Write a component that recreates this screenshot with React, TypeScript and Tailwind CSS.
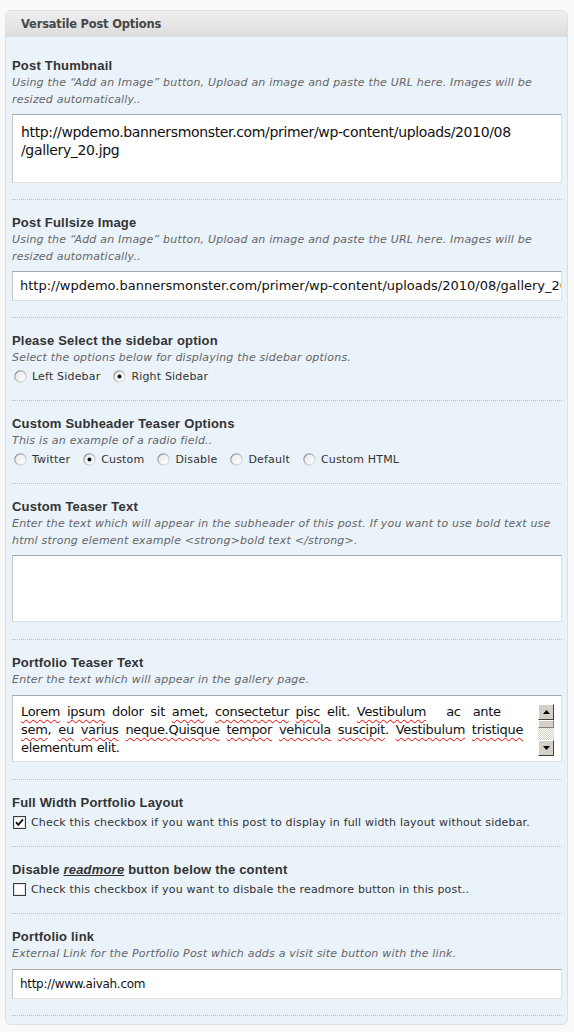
import React from 'react';

const label = "font-['Liberation_Sans',Arial,sans-serif] font-bold text-[13px] tracking-[0.2px] leading-[16px] text-[#333]";
const desc = "font-['DejaVu_Sans',Verdana,sans-serif] italic text-[11px] tracking-[0.2px] leading-[17px] text-[#666]";
const small = "font-['DejaVu_Sans',Verdana,sans-serif] text-[11px] tracking-[0.18px] leading-[17px] text-[#333]";
const field = "font-['DejaVu_Sans',Verdana,sans-serif] text-[#111] bg-white border border-[#dfdfdf] border-t-[#a9a9a9] border-l-[#c6c6c6]";

const Radio = ({ checked }: { checked?: boolean }) => (
  <svg width="13" height="13" viewBox="0 0 13 13" className="shrink-0">
    <defs>
      <linearGradient id="radioRing" x1="0" y1="0" x2="1" y2="1">
        <stop offset="0" stopColor="#7a7a7a" />
        <stop offset="0.55" stopColor="#c4c4c4" />
        <stop offset="1" stopColor="#f0f0f0" />
      </linearGradient>
      <linearGradient id="radioFill" x1="0" y1="0" x2="1" y2="1">
        <stop offset="0" stopColor="#e8e8e8" />
        <stop offset="1" stopColor="#ffffff" />
      </linearGradient>
    </defs>
    <circle cx="6.5" cy="6.5" r="6.2" fill="url(#radioRing)" />
    <circle cx="6.5" cy="6.5" r="5" fill="url(#radioFill)" />
    {checked && <circle cx="6.5" cy="6.5" r="2" fill="#111" />}
  </svg>
);

const Checkbox = ({ checked }: { checked?: boolean }) => (
  <svg width="13" height="13" viewBox="0 0 13 13" className="shrink-0">
    <rect x="0.5" y="0.5" width="12" height="12" fill="#fff" stroke="#3c3c3c" />
    <rect x="1.5" y="1.5" width="10" height="10" fill="none" stroke="#e4e4e4" />
    {checked && <path d="M3 6.2 L5.3 8.8 L10 3.4" fill="none" stroke="#111" strokeWidth="1.9" />}
  </svg>
);

const RadioRow = ({ items, selected, mt }: { items: string[]; selected: string; mt: string }) => (
  <div className={`flex items-center h-[17px] pl-[2px] ${mt}`}>
    {items.map(item => (
      <div key={item} className="flex items-center mr-[13px]">
        <Radio checked={item === selected} />
        <span className={`${small} ml-[5px]`}>{item}</span>
      </div>
    ))}
  </div>
);

const Section = ({ children, className }: { children: React.ReactNode; className: string }) => (
  <div className={`pt-[15px] border-b border-dotted border-[#bcbcbc] ${className}`}>{children}</div>
);

const Squiggle = ({ children }: { children: React.ReactNode }) => (
  <span className="underline decoration-wavy decoration-[#e00] decoration-1 underline-offset-[3px]">{children}</span>
);

const ScrollBtn = ({ up }: { up?: boolean }) => (
  <div className="h-[16px] bg-[#d4d0c8] border border-t-white border-l-white border-r-[#404040] border-b-[#404040] flex items-center justify-center">
    <svg width="7" height="4" viewBox="0 0 7 4">
      <path d={up ? 'M0 4 L3.5 0 L7 4 Z' : 'M0 0 L3.5 4 L7 0 Z'} fill="#000" />
    </svg>
  </div>
);

const App: React.FC = () => {
  return (
    <div className="min-h-screen bg-[#f9f9f9] pt-[10px] pb-[7px]">
      <div className="ml-[5px] w-[563px] border border-[#dfdfdf] rounded-[6px] overflow-hidden bg-[#eaf2fa]">
        {/* header */}
        <div className="h-[26px] bg-gradient-to-b from-[#efefef] to-[#dcdcdc] flex items-center pl-[15px] pt-[2px]">
          <h3 className="font-['DejaVu_Sans',Verdana,sans-serif] font-bold text-[11.5px] tracking-[-0.2px] text-[#464646]">
            Versatile Post Options
          </h3>
        </div>

        <div className="pt-[6px] pl-[6px] pr-[5px] pb-[8px]">
          <Section className="pb-[16px]">
            <div className={label}>Post Thumbnail</div>
            <div className={desc}>
              Using the “Add an Image” button, Upload an image and paste the URL here. Images will be resized automatically..
            </div>
            <div className={`${field} mt-[6px] h-[69px] pl-[8px] pt-[8px] text-[14px] tracking-[-0.35px] leading-[18px]`}>
              <div>http://wpdemo.bannersmonster.com/primer/wp-content/uploads/2010/08</div>
              <div>/gallery_20.jpg</div>
            </div>
          </Section>

          <Section className="pb-[16px]">
            <div className={label}>Post Fullsize Image</div>
            <div className={desc}>
              Using the “Add an Image” button, Upload an image and paste the URL here. Images will be resized automatically..
            </div>
            <div className={`${field} mt-[6px] h-[30px] pl-[7px] flex items-center overflow-hidden whitespace-nowrap text-[13px]`}>
              http://wpdemo.bannersmonster.com/primer/wp-content/uploads/2010/08/gallery_20.jpg
            </div>
          </Section>

          <Section className="pb-[15px]">
            <div className={label}>Please Select the sidebar option</div>
            <div className={desc}>Select the options below for displaying the sidebar options.</div>
            <RadioRow items={['Left Sidebar', 'Right Sidebar']} selected="Right Sidebar" mt="mt-[2px]" />
          </Section>

          <Section className="pb-[15px]">
            <div className={label}>Custom Subheader Teaser Options</div>
            <div className={desc}>This is an example of a radio field..</div>
            <RadioRow items={['Twitter', 'Custom', 'Disable', 'Default', 'Custom HTML']} selected="Custom" mt="mt-[2px]" />
          </Section>

          <Section className="pb-[17px]">
            <div className={label}>Custom Teaser Text</div>
            <div className={desc}>
              Enter the text which will appear in the subheader of this post. If you want to use bold text use html strong element example &lt;strong&gt;bold text &lt;/strong&gt;.
            </div>
            <div className={`${field} mt-[6px] h-[67px]`} />
          </Section>

          <Section className="pb-[17px]">
            <div className={label}>Portfolio Teaser Text</div>
            <div className={desc}>Enter the text which will appear in the gallery page.</div>
            <div className={`${field} mt-[7px] h-[67px] flex pl-[8px] pt-[7px] pr-[7px] text-[13px] tracking-[-0.3px] leading-[18px]`}>
              <div className="flex-1 pr-[12px] whitespace-nowrap">
                <div className="[word-spacing:3px]">
                  <Squiggle>Lorem</Squiggle> <Squiggle>ipsum</Squiggle> dolor sit <Squiggle>amet</Squiggle>, <Squiggle>consectetur</Squiggle> <Squiggle>pisc</Squiggle> elit. <Squiggle>Vestibulum</Squiggle>
                  <span className="ml-[20px]">ac</span>
                  <span className="ml-[12px]">ante</span>
                </div>
                <div className="[word-spacing:3px]">
                  <Squiggle>sem</Squiggle>, <Squiggle>eu</Squiggle> <Squiggle>varius</Squiggle> <Squiggle>neque.Quisque</Squiggle> <Squiggle>tempor</Squiggle> <Squiggle>vehicula</Squiggle> <Squiggle>suscipit</Squiggle>. <Squiggle>Vestibulum</Squiggle> <Squiggle>tristique</Squiggle>
                </div>
                <div>elementum elit.</div>
              </div>
              <div className="w-[16px] mt-[1px] h-[52px] flex flex-col">
                <ScrollBtn up />
                <div className="h-[8px] bg-[#d4d0c8] border border-t-white border-l-white border-r-[#808080] border-b-[#808080]" />
                <div className="flex-1 bg-[repeating-conic-gradient(#d4d0c8_0_25%,#ffffff_0_50%)] bg-[length:2px_2px]" />
                <ScrollBtn />
              </div>
            </div>
          </Section>

          <Section className="pb-[15px]">
            <div className={label}>Full Width Portfolio Layout</div>
            <div className="flex items-center h-[17px] mt-[3px] pl-[1px]">
              <Checkbox checked />
              <span className={`${small} ml-[5px]`}>
                Check this checkbox if you want this post to display in full width layout without sidebar.
              </span>
            </div>
          </Section>

          <Section className="pb-[15px]">
            <div className={label}>
              Disable <span className="italic underline">readmore</span> button below the content
            </div>
            <div className="flex items-center h-[17px] mt-[3px] pl-[1px]">
              <Checkbox />
              <span className={`${small} ml-[5px]`}>
                Check this checkbox if you want to disbale the readmore button in this post..
              </span>
            </div>
          </Section>

          <Section className="pb-[16px]">
            <div className={label}>Portfolio link</div>
            <div className={desc}>External Link for the Portfolio Post which adds a visit site button with the link.</div>
            <div className={`${field} mt-[7px] h-[30px] pl-[7px] flex items-center text-[12px] tracking-[-0.3px]`}>
              http://www.aivah.com
            </div>
          </Section>
        </div>
      </div>
    </div>
  );
};

export default App;
